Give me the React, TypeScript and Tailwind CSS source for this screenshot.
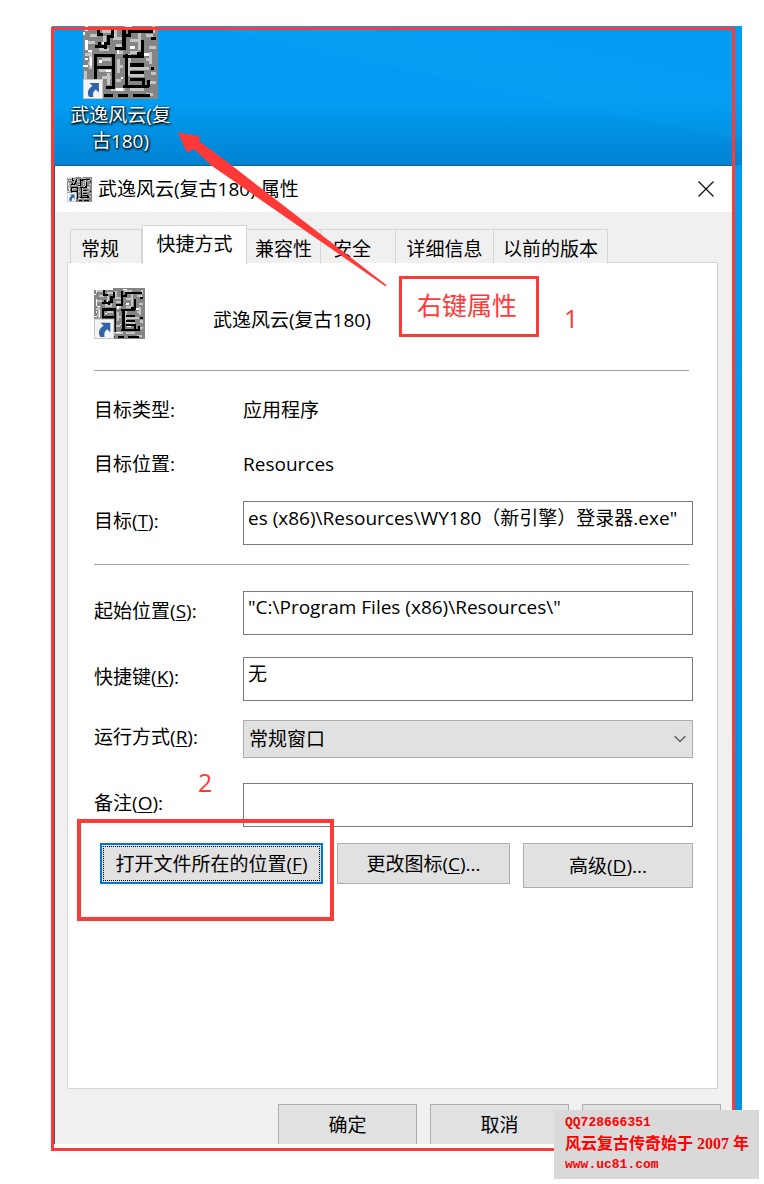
import type { ReactNode } from "react";

type IconProps = { className: string; badge: number };

function DragonIcon({ className, badge }: IconProps) {
  return (
    <svg viewBox="0 0 32 32" className={className} aria-hidden="true">
      <g shapeRendering="crispEdges" fill="none" strokeLinecap="butt">
        <rect width="32" height="32" fill="#858585" />
        <path
          stroke="#c4c4c4"
          strokeWidth="1.3"
          d="M1 2h5M3 5h3M8 3h4M13 6h4M19 2h5M27 5h3M2 8h3M7 11h4M14 9h3M20 7h4M28 10h3M1 13h3M8 15h4M15 12h2M20 12h4M27 15h2M2 17h2M7 20h5M15 18h2M20 19h8M29 21h2M8 23h4M14 24h2M20 22h6M28 25h3M12 28h6M20 28h6M27 30h3M15 15v6M29 12v5M3 12v7M9 5v4M24 3v8M11 21v5M20 13v9M30 1v3M14 2v5M1 20v4"
        />
        <path
          stroke="#fff"
          strokeWidth="1"
          d="M0 .5h12M1.500 0v3M0 4h1M1.500 7v4M2 11.500h2M8 8h1M1 15h1M3.500 14v4M7 16h1M10 20h2M15 11v2M16 23h1M14 28h3M20 10h2M26 13h2M18 1h3M0 18h2M21 24h2M13 20v2"
        />
        <path
          stroke="#000"
          strokeWidth="1.300"
          d="M6.500 1.500v3h2M5 9.500h4M7 7.500v2M12.500 2.500v3h-1.500v3h-1.500v2M17.500 2v8.500h-4M17 5h3v-2h6M22 3h2M26 3h4M29 6h2M25.500 7v7M23 12.500h3M5.500 24V13.500h7.500V27h-3M5.500 18.500h7M18.500 13v13.500M17 14h9M20 17.500h6M20 20.500h6M20 23.500h6v3M17 26.500h11M28 24v3M9 30.500h4M15 30.500h4M21.500 30.500h7M29 19h1.500"
        />
      </g>
      <g transform={`translate(0 ${32 - badge}) scale(${badge / 20})`}>
        <rect x="0.500" y="0.500" width="19" height="19" fill="#f4f4f4" stroke="#c8c8c8" />
        <path d="M6.500 4h9.500v9.500l-3.200-3c-2.500 1.800-3 4-2.500 7.500h-4C3.500 14 5 9.500 9.500 7z" fill="#2f64a8" />
      </g>
    </svg>
  );
}

function Key({ text, k, end }: { text: string; k: string; end: string }) {
  return (
    <>
      {text}(<span className="underline decoration-1 underline-offset-2">{k}</span>){end}
    </>
  );
}

function Row({ id, label, className, children }: { id?: string; label: ReactNode; className: string; children: ReactNode }) {
  return (
    <div className={`flex items-center ${className}`}>
      {id ? (
        <label htmlFor={id} className="w-[149px] shrink-0 pb-1 whitespace-nowrap">{label}</label>
      ) : (
        <span className="w-[149px] shrink-0 whitespace-nowrap">{label}</span>
      )}
      {children}
    </div>
  );
}

const field = "h-11 min-w-0 flex-1 border border-[#7a7a7a] bg-white px-1 pb-3 outline-none";
const action = "border border-[#adadad] bg-[#e1e1e1] text-center whitespace-nowrap";
const tab = "h-[34px] border-t border-r border-[#d5d5d5] bg-[#f0f0f0] pt-1 text-center whitespace-nowrap";

export default function App() {
  return (
    <main className="relative min-h-screen bg-white pt-[26px] pr-[22px] pb-10 pl-[52px] font-['Open_Sans','Noto_Sans_CJK_SC',sans-serif] text-[19px] leading-6 text-black">
      <div className="relative bg-linear-to-b from-[#029df2] to-[#008fe0]">
        <section className="flex h-[139px] flex-col items-start overflow-hidden bg-[linear-gradient(12deg,transparent_60%,#0aa6f633_60%,transparent_85%),linear-gradient(to_bottom,#029df2_55%,#0082d2)]">
          <div className="flex w-[137px] flex-col items-center">
            <DragonIcon className="-mt-0.5 size-[75px]" badge={8.5} />
            <p className="mt-[3px] text-center leading-[26px] text-white [text-shadow:1px_1px_2px_#000,0_1px_3px_#000]">
              武逸风云(复
              <br />
              古180)
            </p>
          </div>
        </section>

        <section className="mr-[10px] ml-[2px] border-t border-l border-[#1c5f8c] bg-[#f0f0f0]" aria-label="属性">
          <header className="flex h-[46px] items-center bg-white pr-[18px] pl-3">
            <DragonIcon className="size-[25px]" badge={12} />
            <h1 className="ml-[6px] flex-1">武逸风云(复古180) 属性</h1>
            <button type="button" aria-label="关闭">
              <svg viewBox="0 0 16 16" className="size-4" fill="none" stroke="#111" strokeWidth="1.300">
                <path d="M.5.5l15 15M15.500.5l-15 15" />
              </svg>
            </button>
          </header>

          <div className="pt-[13px] pr-[14px] pl-3">
            <nav className="flex items-end pl-[3px]" role="tablist">
              <button type="button" role="tab" className={`${tab} w-[72px] border-l pr-3`}>常规</button>
              <button type="button" role="tab" aria-selected="true" className="relative z-10 -mb-px h-[39px] w-[105px] border border-b-0 border-[#d5d5d5] bg-white pb-0.5 text-center whitespace-nowrap">快捷方式</button>
              <button type="button" role="tab" className={`${tab} w-[74px]`}>兼容性</button>
              <button type="button" role="tab" className={`${tab} w-[75px] pr-3`}>安全</button>
              <button type="button" role="tab" className={`${tab} w-[98px]`}>详细信息</button>
              <button type="button" role="tab" className={`${tab} w-[114px]`}>以前的版本</button>
            </nav>

            <div className="-mt-px h-[827px] border border-[#d5d5d5] bg-white pt-[25px] pr-6 pl-[26px]">
              <div className="flex h-[51px] items-center">
                <DragonIcon className="size-[51px]" badge={12.8} />
                <span className="mt-3 ml-[68px]">武逸风云(复古180)</span>
              </div>
              <hr className="mt-[31px] mr-1 border-[#a0a0a0]" />
              <Row label="目标类型:" className="mt-[19px] h-10">
                <span>应用程序</span>
              </Row>
              <Row label="目标位置:" className="mt-[14px] h-10">
                <span>Resources</span>
              </Row>
              <Row id="target" label={<Key text="目标" k="T" end=":" />} className="mt-[17px]">
                <input id="target" className={field} defaultValue={'es (x86)\\Resources\\WY180（新引擎）登录器.exe"'} />
              </Row>
              <hr className="mt-[19px] mr-1 border-[#a0a0a0]" />
              <Row id="start" label={<Key text="起始位置" k="S" end=":" />} className="mt-[26px]">
                <input id="start" className={field} defaultValue={'"C:\\Program Files (x86)\\Resources\\"'} />
              </Row>
              <Row id="hotkey" label={<Key text="快捷键" k="K" end=":" />} className="mt-[22px]">
                <input id="hotkey" className={field} defaultValue="无" />
              </Row>
              <Row id="run" label={<Key text="运行方式" k="R" end=":" />} className="mt-[19px]">
                <div className="relative flex min-w-0 flex-1">
                  <select id="run" className="h-[38px] w-full appearance-none border border-[#adadad] bg-[#e1e1e1] px-[5px]">
                    <option>常规窗口</option>
                  </select>
                  <svg viewBox="0 0 12 8" className="pointer-events-none absolute top-[15px] right-[7px] h-2 w-3" fill="none" stroke="#606060" strokeWidth="1.500">
                    <path d="M.5 1L6 6.500L11.500 1" />
                  </svg>
                </div>
              </Row>
              <Row id="note" label={<Key text="备注" k="O" end=":" />} className="mt-[25px]">
                <input id="note" className={field} />
              </Row>
              <div className="mt-4 flex items-start pl-[6px]">
                <button type="button" className="h-[41px] w-[223px] border-2 border-[#0078d7] bg-[#e1e1e1] p-px whitespace-nowrap">
                  <span className="flex h-full items-center justify-center border border-dotted border-black">
                    <Key text="打开文件所在的位置" k="F" end="" />
                  </span>
                </button>
                <button type="button" className={`${action} ml-[14px] h-[41px] w-[173px]`}>
                  <Key text="更改图标" k="C" end="..." />
                </button>
                <button type="button" className={`${action} ml-[13px] h-[45px] w-[170px]`}>
                  <Key text="高级" k="D" end="..." />
                </button>
              </div>
            </div>

            <footer className="-mr-[3px] mt-[15px] flex justify-end gap-[13px]">
              <button type="button" className={`${action} h-10 w-[139px] border-b-0`}>确定</button>
              <button type="button" className={`${action} h-10 w-[139px] border-b-0`}>取消</button>
              <button type="button" aria-label="应用" className={`${action} h-10 w-[139px] border-b-0`} />
            </footer>
          </div>
        </section>

        <div className="pointer-events-none absolute top-px right-[7px] -bottom-[7px] -left-px border-3 border-[#ff3838]" />

        <svg viewBox="0 0 212 158" className="pointer-events-none absolute top-[104px] left-[124px] h-[158px] w-[212px]" aria-hidden="true">
          <path d="M1.700 2.300L24 6.500L23 11L50 31L211 155.500L209 156L36 36L18 19L11 22.500Z" fill="#ff3838" />
        </svg>
        <div className="pointer-events-none absolute top-[250px] left-[347px] flex h-[61px] w-[140px] items-center justify-center border-3 border-[#ff3838] pr-1 pb-1 text-[25px] text-[#ff3838]">
          右键属性
        </div>
        <span className="absolute top-[280px] left-[512px] text-[25px] text-[#ff3838]">1</span>
        <span className="absolute top-[744px] left-[146px] text-[25px] text-[#ff3838]">2</span>
        <div className="pointer-events-none absolute top-[793px] left-[25px] h-[102px] w-[257px] border-4 border-[#ff3838]" />
      </div>

      <aside className="absolute top-[1110px] right-[5px] h-[69px] w-[205px] bg-[#d9d9d9] pt-0.5 pl-[11px] font-['Liberation_Mono','Noto_Sans_CJK_SC',monospace] text-[13px] leading-[21px] font-bold whitespace-nowrap text-[#ff0000]">
        <p>QQ728666351</p>
        <p className="font-['Liberation_Serif','Noto_Sans_CJK_SC',serif] text-[16px]">风云复古传奇始于 2007 年</p>
        <p>www.uc81.com</p>
      </aside>
    </main>
  );
}
